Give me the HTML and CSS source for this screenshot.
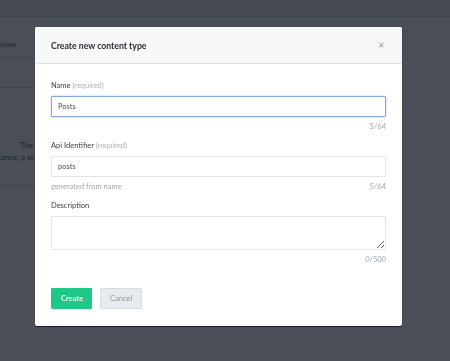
FILE: index.html
```
<!DOCTYPE html>
<html lang="en">
<head>
    <meta charset="UTF-8">
    <meta name="viewport" content="width=device-width, initial-scale=1.0">
    <title>Content types</title>
    <link rel="stylesheet" href="styles.css">
</head>
<body>
    <!-- page behind the dialog -->
    <div class="page">
        <header class="topbar"></header>
        <div class="tabs">
            <span class="tab">Preview</span>
        </div>
        <div class="subbar"></div>
        <div class="empty">
            <p class="first">The fi</p>
            <p class="second">instance, a te</p>
        </div>
    </div>

    <div class="overlay">
        <div class="modal">
            <div class="modal-header">
                <h2>Create new content type</h2>
                <button class="close">&#x2715;</button>
            </div>
            <div class="modal-body">
                <div class="field">
                    <label>Name <span class="req">(required)</span></label>
                    <input type="text" class="focused" value="Posts">
                    <div class="hint"><span></span><span>5/64</span></div>
                </div>
                <div class="field">
                    <label>Api Identifier <span class="req">(required)</span></label>
                    <input type="text" value="posts">
                    <div class="hint"><span>generated from name</span><span>5/64</span></div>
                </div>
                <div class="field">
                    <label>Description</label>
                    <textarea></textarea>
                    <div class="hint"><span></span><span>0/500</span></div>
                </div>
                <div class="actions">
                    <button class="btn primary">Create</button>
                    <button class="btn">Cancel</button>
                </div>
            </div>
        </div>
    </div>
</body>
</html>
```

FILE: styles.css
```
body, html {
    margin: 0;
    padding: 0;
    box-sizing: border-box;
    font-family: Lato, "Liberation Sans", sans-serif;
}
body {
    background-color: #4a4f57;
    width: 450px;
    height: 361px;
    overflow: hidden;
}
.page {
    color: #22262b;
}
.topbar {
    height: 16px;
    background-color: #464b52;
    border-bottom: 1px solid #40444b;
}
.tabs {
    height: 40px;
    width: 35px;
    border-bottom: 1px solid #3f434a;
    display: flex;
    align-items: center;
    font-size: 7px;
    overflow: hidden;
}
.tab {
    padding-top: 14px;
    margin-left: -8px;
}
.subbar {
    height: 29px;
    width: 35px;
    border-bottom: 1px solid #3f434a;
}
.empty {
    padding-top: 51px;
    width: 35px;
    font-size: 8px;
    border-bottom: 1px solid #3f434a;
    padding-bottom: 22px;
    overflow: hidden;
}
.empty p {
    margin: 0;
    line-height: 12px;
    white-space: nowrap;
}
.empty .first {
    padding-left: 20px;
}
.empty .second {
    margin-left: -12px;
}
.overlay {
    position: fixed;
    inset: 0;
}
.modal {
    position: absolute;
    left: 35px;
    top: 27px;
    width: 367px;
    background-color: #fff;
    border-radius: 2px;
    box-shadow: 0 1px 1px rgba(10, 20, 40, 0.8);
    color: #2a2f36;
}
.modal-header {
    height: 37px;
    background-color: #f7f8fa;
    border-bottom: 1px solid #dbe1e7;
    display: flex;
    align-items: center;
    justify-content: space-between;
    padding: 0 17px 0 16px;
    box-sizing: border-box;
    border-radius: 2px 2px 0 0;
}
.modal-header h2 {
    margin: 0;
    font-size: 8.7px;
    font-weight: bold;
    color: #2a2f36;
}
.close {
    border: none;
    background: none;
    padding: 0;
    color: #8e97a1;
    font-size: 8px;
    cursor: pointer;
}
.modal-body {
    padding: 17px 16px 17px 16px;
}
.field {
    display: flex;
    flex-direction: column;
    margin-bottom: 9px;
}
.field label {
    font-size: 7.5px;
    line-height: 10px;
    color: #3c424a;
    margin-bottom: 5px;
}
.req {
    color: #a9b3be;
}
.field input, .field textarea {
    box-sizing: border-box;
    width: 100%;
    height: 21px;
    border: 1px solid #e1e5e9;
    border-radius: 1px;
    padding: 0 6px;
    font-family: inherit;
    font-size: 7.5px;
    color: #4a5059;
    outline: none;
}
.field input.focused {
    border-color: #7fa8e4;
    box-shadow: 0 0 2px rgba(90, 140, 220, 0.5);
}
.field textarea {
    height: 34px;
    resize: vertical;
}
.hint {
    display: flex;
    justify-content: space-between;
    font-size: 7.5px;
    line-height: 10px;
    color: #9ea8b3;
    margin-top: 5px;
}
.actions {
    display: flex;
    gap: 8px;
    margin-top: 23px;
}
.btn {
    height: 21px;
    padding: 0 9px;
    border: 1px solid #d7dce1;
    border-radius: 1px;
    background-color: #e8ebee;
    color: #8c96a1;
    font-family: inherit;
    font-size: 7.5px;
    cursor: pointer;
}
.btn.primary {
    background-color: #1dc888;
    border-color: #1dc888;
    color: #fff;
    font-weight: bold;
    width: 41px;
}
.btn:not(.primary) {
    width: 42px;
}
```
